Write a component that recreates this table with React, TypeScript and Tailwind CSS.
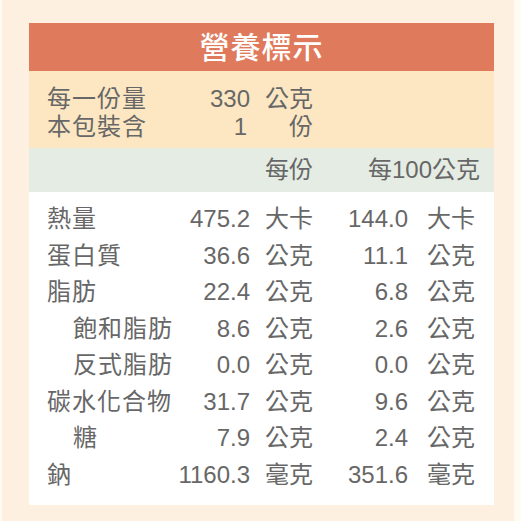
const rows: { label: string; indent?: boolean; a: string; au: string; b: string; bu: string }[] = [
  { label: '熱量', a: '475.2', au: '大卡', b: '144.0', bu: '大卡' },
  { label: '蛋白質', a: '36.6', au: '公克', b: '11.1', bu: '公克' },
  { label: '脂肪', a: '22.4', au: '公克', b: '6.8', bu: '公克' },
  { label: '飽和脂肪', indent: true, a: '8.6', au: '公克', b: '2.6', bu: '公克' },
  { label: '反式脂肪', indent: true, a: '0.0', au: '公克', b: '0.0', bu: '公克' },
  { label: '碳水化合物', a: '31.7', au: '公克', b: '9.6', bu: '公克' },
  { label: '糖', indent: true, a: '7.9', au: '公克', b: '2.4', bu: '公克' },
  { label: '鈉', a: '1160.3', au: '毫克', b: '351.6', bu: '毫克' },
];

const grid = 'grid grid-cols-[minmax(0,1fr)_90px_63px_95px_67px] items-center';

export default function App() {
  return (
    <div
      className="w-[521px] h-[521px] bg-[#fffaf2] pl-[2px] text-[#676767] text-[24px]"
      style={{ fontFamily: '"Liberation Sans", "Noto Sans CJK TC", sans-serif' }}
    >
      <div className="w-[512px] h-full bg-[#fdf0e0] pt-[23px] pl-[27px]">
        <div className="w-[465px] flex flex-col">
          {/* 標題 */}
          <div className="h-[48px] bg-[#e07a5c] flex items-center justify-center">
            <span className="text-white text-[30px] font-medium leading-none tracking-[1px] mt-[2px]">營養標示</span>
          </div>

          {/* 份量 */}
          <div className="bg-[#fde7c3] pl-[18px] pr-[19px] pt-[10px] pb-[11px]">
            <div className={`${grid} h-[28px]`}>
              <span className="whitespace-nowrap tracking-[1px]">每一份量</span>
              <span className="text-right">330</span>
              <span className="text-right">公克</span>
              <span />
              <span />
            </div>
            <div className={`${grid} h-[28px]`}>
              <span className="whitespace-nowrap tracking-[1px]">本包裝含</span>
              <span className="text-right pr-[3px]">1</span>
              <span className="text-right">份</span>
              <span />
              <span />
            </div>
          </div>

          {/* 欄位標題 */}
          <div className={`${grid} bg-[#e5ece3] h-[44px] pl-[18px] pr-[19px]`}>
            <span />
            <span />
            <span className="text-right whitespace-nowrap">每份</span>
            <span />
            <span className="text-right whitespace-nowrap -ml-[40px]">每100公克</span>
          </div>

          {/* 營養素 */}
          <div className="bg-white pl-[18px] pr-[19px] pt-[9px] pb-[12px]">
            {rows.map((r) => (
              <div key={r.label} className={`${grid} h-[36.5px]`}>
                <span className={`whitespace-nowrap tracking-[1px] ${r.indent ? 'pl-[26px]' : ''}`}>{r.label}</span>
                <span className="text-right">{r.a}</span>
                <span className="pl-[15px] whitespace-nowrap">{r.au}</span>
                <span className="text-right">{r.b}</span>
                <span className="pl-[19px] whitespace-nowrap">{r.bu}</span>
              </div>
            ))}
          </div>
        </div>
      </div>
    </div>
  );
}
